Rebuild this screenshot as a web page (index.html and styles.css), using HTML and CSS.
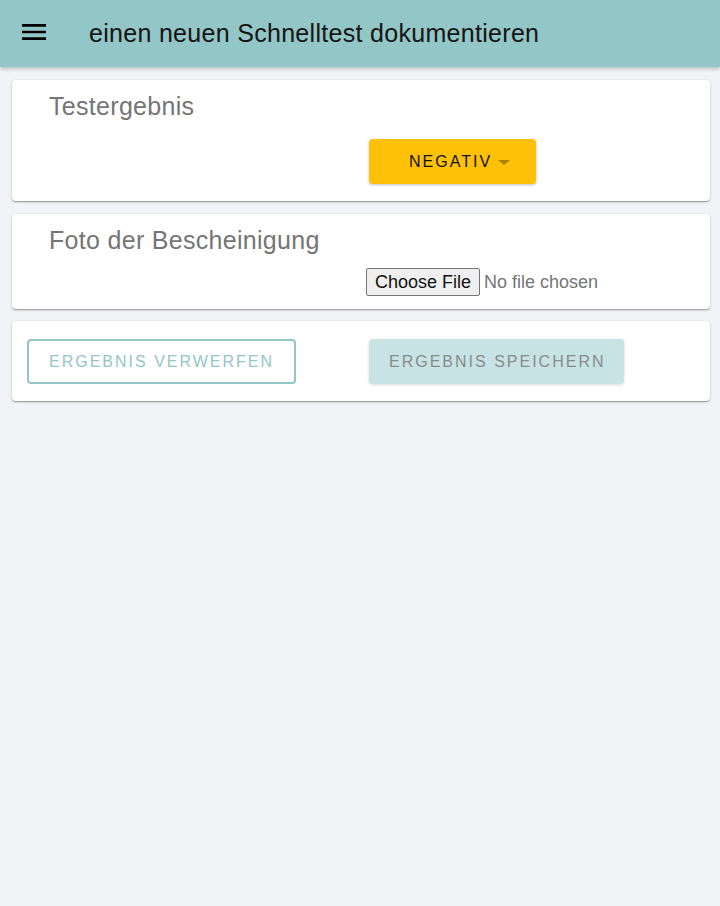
FILE: index.html
```html
<!DOCTYPE html>
<html lang="de">
<head>
<meta charset="utf-8">
<title>Schnelltest dokumentieren</title>
<link rel="stylesheet" href="styles.css">
</head>
<body>
<header class="appbar">
  <button class="menu-btn" aria-label="Menü">
    <svg width="32" height="32" viewBox="0 0 24 24"><path d="M3 18h18v-2H3v2zm0-5h18v-2H3v2zm0-7v2h18V6H3z" fill="#000"/></svg>
  </button>
  <h1 class="appbar-title">einen neuen Schnelltest dokumentieren</h1>
</header>
<main class="content">
  <section class="card card-result">
    <h2 class="card-title">Testergebnis</h2>
    <div class="row">
      <div class="col"></div>
      <div class="col">
        <button class="btn btn-amber">NEGATIV<span class="caret"></span></button>
      </div>
    </div>
  </section>
  <section class="card card-photo">
    <h2 class="card-title">Foto der Bescheinigung</h2>
    <div class="row">
      <div class="col"></div>
      <div class="col">
        <input class="file-input" type="file">
      </div>
    </div>
  </section>
  <section class="card card-actions">
    <div class="row">
      <div class="col">
        <button class="btn btn-outline">ERGEBNIS VERWERFEN</button>
      </div>
      <div class="col">
        <button class="btn btn-disabled" disabled>ERGEBNIS SPEICHERN</button>
      </div>
    </div>
  </section>
</main>
</body>
</html>
```
FILE: styles.css
```css
html, body {
  margin: 0;
  padding: 0;
}
body {
  background: #f2f3f7;
  font-family: "Liberation Sans", Arial, sans-serif;
  min-height: 906px;
}
.appbar {
  height: 67px;
  background: #93c6c7;
  display: flex;
  align-items: center;
  box-shadow: 0 2px 4px rgba(0,0,0,0.22);
  position: relative;
  z-index: 1;
}
.menu-btn {
  background: none;
  border: 0;
  padding: 0;
  margin: 0 0 3px 18px;
  width: 32px;
  height: 32px;
  display: flex;
  cursor: pointer;
}
.appbar-title {
  margin: 0 0 0 39px;
  font-weight: 400;
  font-size: 25px;
  letter-spacing: 0.3px;
  color: #141414;
  line-height: 30px;
  padding-bottom: 1px;
}
.content {
  padding: 13px 10px 0 12px;
  display: flex;
  flex-direction: column;
  gap: 12px;
}
.card {
  background: #fff;
  border-radius: 4px;
  box-shadow: 0 1px 3px rgba(0,0,0,0.2), 0 1px 1px rgba(0,0,0,0.14), 0 2px 1px -1px rgba(0,0,0,0.12);
  padding: 11px 15px 17px;
}
.card-result { margin-bottom: 1px; }
.card-title {
  margin: 0 0 0 22px;
  font-size: 25px;
  line-height: 30px;
  font-weight: 400;
  letter-spacing: 0.3px;
  color: #757575;
}
.row {
  display: grid;
  grid-template-columns: minmax(0, 1fr) minmax(0, 1fr);
  column-gap: 16px;
}
.card-result .row { margin-top: 18px; }
.card-photo { padding-bottom: 13px; }
.card-photo .row { margin-top: 13px; }
.card-actions { padding-top: 18px; }
.btn {
  font-family: "Liberation Sans", Arial, sans-serif;
  font-size: 16px;
  letter-spacing: 2px;
  height: 45px;
  border-radius: 4px;
  display: inline-flex;
  align-items: center;
  box-sizing: border-box;
  cursor: pointer;
}
.btn-amber {
  width: 167px;
  background: #ffc107;
  border: 0;
  color: #111;
  padding: 0 0 0 40px;
  box-shadow: 0 1px 3px rgba(0,0,0,0.25);
}
.caret {
  display: inline-block;
  width: 0;
  height: 0;
  border-left: 6px solid transparent;
  border-right: 6px solid transparent;
  border-top: 5px solid #a88305;
  margin-left: 6px;
  margin-top: 1px;
}
.btn-outline {
  width: 269px;
  background: #fff;
  border: 2px solid #93c6c7;
  color: #93c6c7;
  padding: 0 0 0 20px;
}
.btn-disabled {
  width: 255px;
  background: #c8e3e3;
  border: 0;
  color: #868c8c;
  padding: 0 0 0 20px;
  box-shadow: 0 1px 3px rgba(0,0,0,0.15);
  cursor: default;
}
.file-input {
  font-family: "Liberation Sans", Arial, sans-serif;
  font-size: 18px;
  color: #757575;
  margin: 0 0 0 -3px;
}
.file-input::file-selector-button {
  font-family: "Liberation Sans", Arial, sans-serif;
  font-size: 18px;
  color: #111;
  height: 28px;
  padding: 0 8px;
  margin-right: 4px;
  border: 1px solid #767676;
  border-radius: 2px;
  background: #efefef;
}
```
